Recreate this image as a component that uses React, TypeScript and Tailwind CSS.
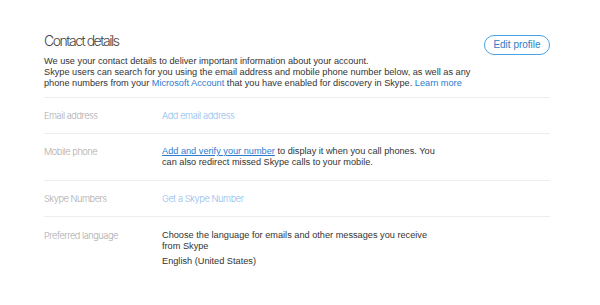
import React from 'react';

const labelCls = "w-[118px] shrink-0 text-[#ababab] font-['Inter',sans-serif] font-light tracking-[-0.45px]";
const rowCls = "flex border-t border-[#eeeeee] pt-[12px] pb-[12px]";

export default function App() {
  return (
    <div className="w-[600px] h-[305px] bg-white overflow-hidden px-[44px] pt-[31px] text-[#333] font-['Liberation_Sans',Arial,sans-serif] text-[9.2px] leading-[11px]">
      <div className="flex items-start justify-between pr-[6px]">
        <h1 className="font-['Inter',sans-serif] font-light text-[14px] leading-[20px] tracking-[-1.5px] text-[#444]">
          Contact details
        </h1>
        <button className="mt-[4px] h-[20px] w-[66px] rounded-full border border-[#4aa3e8] text-[#2f7cc7] text-[10px] leading-[18px]">
          Edit profile
        </button>
      </div>

      <p className="mt-[1px]">
        We use your contact details to deliver important information about your account.
        <br />
        Skype users can search for you using the email address and mobile phone number below, as well as any
        <br />
        phone numbers from your <span className="text-[#2b7bd0]">Microsoft Account</span> that you have enabled for discovery in Skype.{' '}
        <span className="text-[#2b7bd0]">Learn more</span>
      </p>

      <div className="mt-[8px] w-[506px]">
        <div className={rowCls}>
          <div className={labelCls}>Email address</div>
          <div className="text-[#8cbbed] font-['Inter',sans-serif] font-light tracking-[-0.4px]">Add email address</div>
        </div>
        <div className={rowCls}>
          <div className={labelCls}>Mobile phone</div>
          <div className="w-[282px]">
            <span className="text-[#2b7bd0] underline">Add and verify your number</span> to display it when you call phones. You can also redirect missed Skype calls to your mobile.
          </div>
        </div>
        <div className={rowCls}>
          <div className={labelCls}>Skype Numbers</div>
          <div className="text-[#8cbbed] font-['Inter',sans-serif] font-light tracking-[-0.4px]">Get a Skype Number</div>
        </div>
        <div className="flex border-t border-[#eeeeee] pt-[13px]">
          <div className={labelCls}>Preferred language</div>
          <div className="w-[270px]">
            <div>Choose the language for emails and other messages you receive from Skype</div>
            <div className="mt-[4px]">English (United States)</div>
          </div>
        </div>
      </div>
    </div>
  );
}
